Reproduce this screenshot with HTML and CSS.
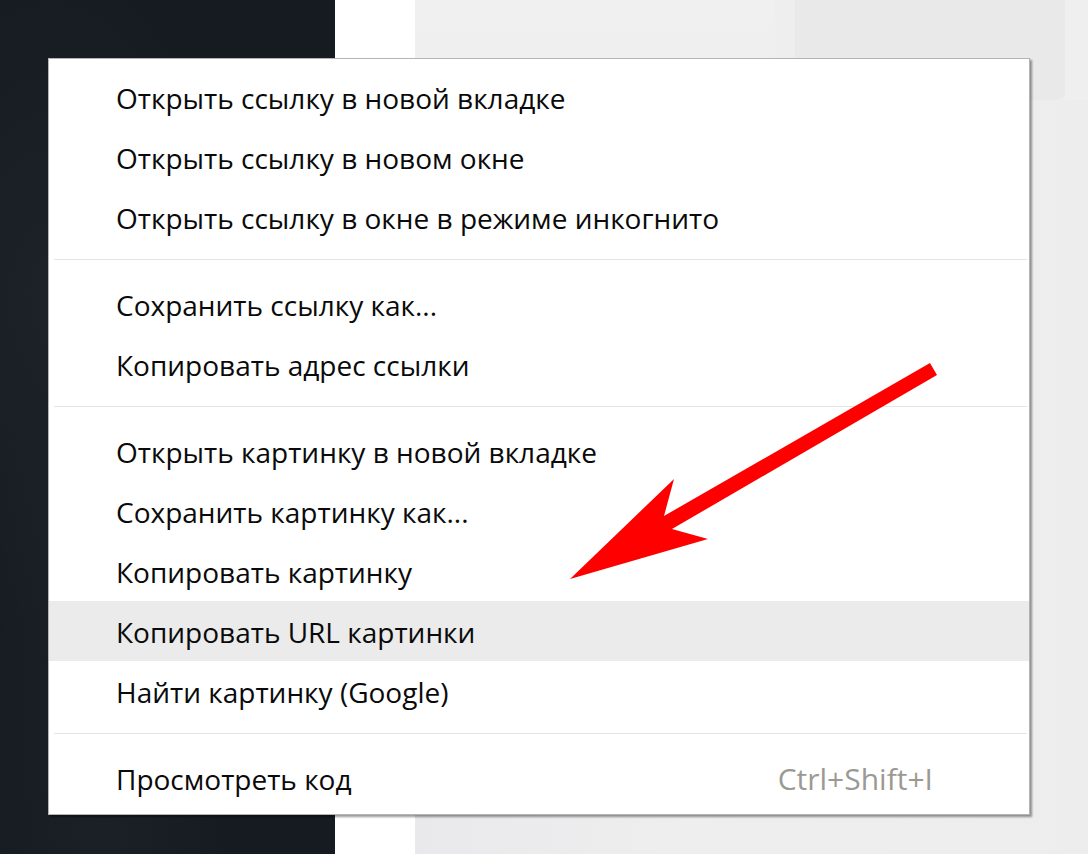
FILE: index.html
```html
<!DOCTYPE html>
<html lang="ru">
<head>
    <meta charset="UTF-8">
    <meta name="viewport" content="width=device-width, initial-scale=1.0">
    <title>Контекстное меню</title>
    <link rel="stylesheet" href="styles.css">
</head>
<body>
    <div class="desktop">
        <div class="panel-dark"></div>
        <div class="panel-white"></div>
        <div class="panel-light">
            <div class="blur-row">
                <div class="blur b1"></div>
                <div class="blur b2"></div>
                <div class="blur b3"></div>
                <div class="blur b4"></div>
            </div>
        </div>
    </div>

    <ul class="menu">
        <li class="item">Открыть ссылку в новой вкладке</li>
        <li class="item">Открыть ссылку в новом окне</li>
        <li class="item">Открыть ссылку в окне в режиме инкогнито</li>
        <li class="sep"></li>
        <li class="item">Сохранить ссылку как...</li>
        <li class="item">Копировать адрес ссылки</li>
        <li class="sep"></li>
        <li class="item">Открыть картинку в новой вкладке</li>
        <li class="item">Сохранить картинку как...</li>
        <li class="item">Копировать картинку</li>
        <li class="item active">Копировать URL картинки</li>
        <li class="item">Найти картинку (Google)</li>
        <li class="sep"></li>
        <li class="item">Просмотреть код <span class="shortcut">Ctrl+Shift+I</span></li>
    </ul>

    <!-- red pointer drawn on top of the screenshot -->
    <svg class="arrow" width="1088" height="854" viewBox="0 0 1088 854">
        <polygon fill="#ff0000" points="570,579 674,479 664,516 930,363 937,375 672,529 708,539"/>
    </svg>
</body>
</html>
```

FILE: styles.css
```css
body {
    margin: 0;
    width: 1088px;
    height: 854px;
    overflow: hidden;
    font-family: "Open Sans", "Noto Sans", sans-serif;
}
.desktop {
    display: flex;
    height: 854px;
}
.panel-dark {
    width: 335px;
    background:
        radial-gradient(ellipse at 15% 35%, rgba(40, 48, 52, 0.35), transparent 45%),
        radial-gradient(ellipse at 30% 85%, rgba(40, 48, 52, 0.3), transparent 40%),
        #161b22;
}
.panel-white {
    width: 80px;
    background: #ffffff;
}
.panel-light {
    flex: 1;
    background: linear-gradient(90deg, #e9e8ea 0%, #efeeef 40%, #ededee 100%);
}
.blur-row {
    display: flex;
    height: 100px;
}
.blur {
    height: 100%;
}
.b1 { width: 360px; background: linear-gradient(180deg, #f0f0f0, #eeeeee); }
.b2 { width: 20px; background: #eeeeee; }
.b3 { width: 270px; background: #e9e9e9; border-radius: 0 0 8px 8px; }
.b4 { flex: 1; background: #efefef; }

.menu {
    position: absolute;
    left: 48px;
    top: 58px;
    width: 980px;
    margin: 0;
    padding: 8px 0 6px;
    list-style: none;
    background: #ffffff;
    border: 1px solid #b4b4b4;
    box-shadow: 2px 2px 2px rgba(0, 0, 0, 0.4);
}
.item {
    display: flex;
    justify-content: space-between;
    align-items: center;
    height: 60px;
    padding: 1px 96px 0 67px;
    box-sizing: border-box;
    font-size: 28px;
    color: #0a0a0a;
}
.item.active {
    background: #ebebeb;
}
.shortcut {
    font-size: 30px;
    color: #9b9a92;
}
.sep {
    height: 1px;
    margin: 12px 2px 14px 5px;
    background: #e4e4e4;
}
.arrow {
    position: absolute;
    left: 0;
    top: 0;
}
```
